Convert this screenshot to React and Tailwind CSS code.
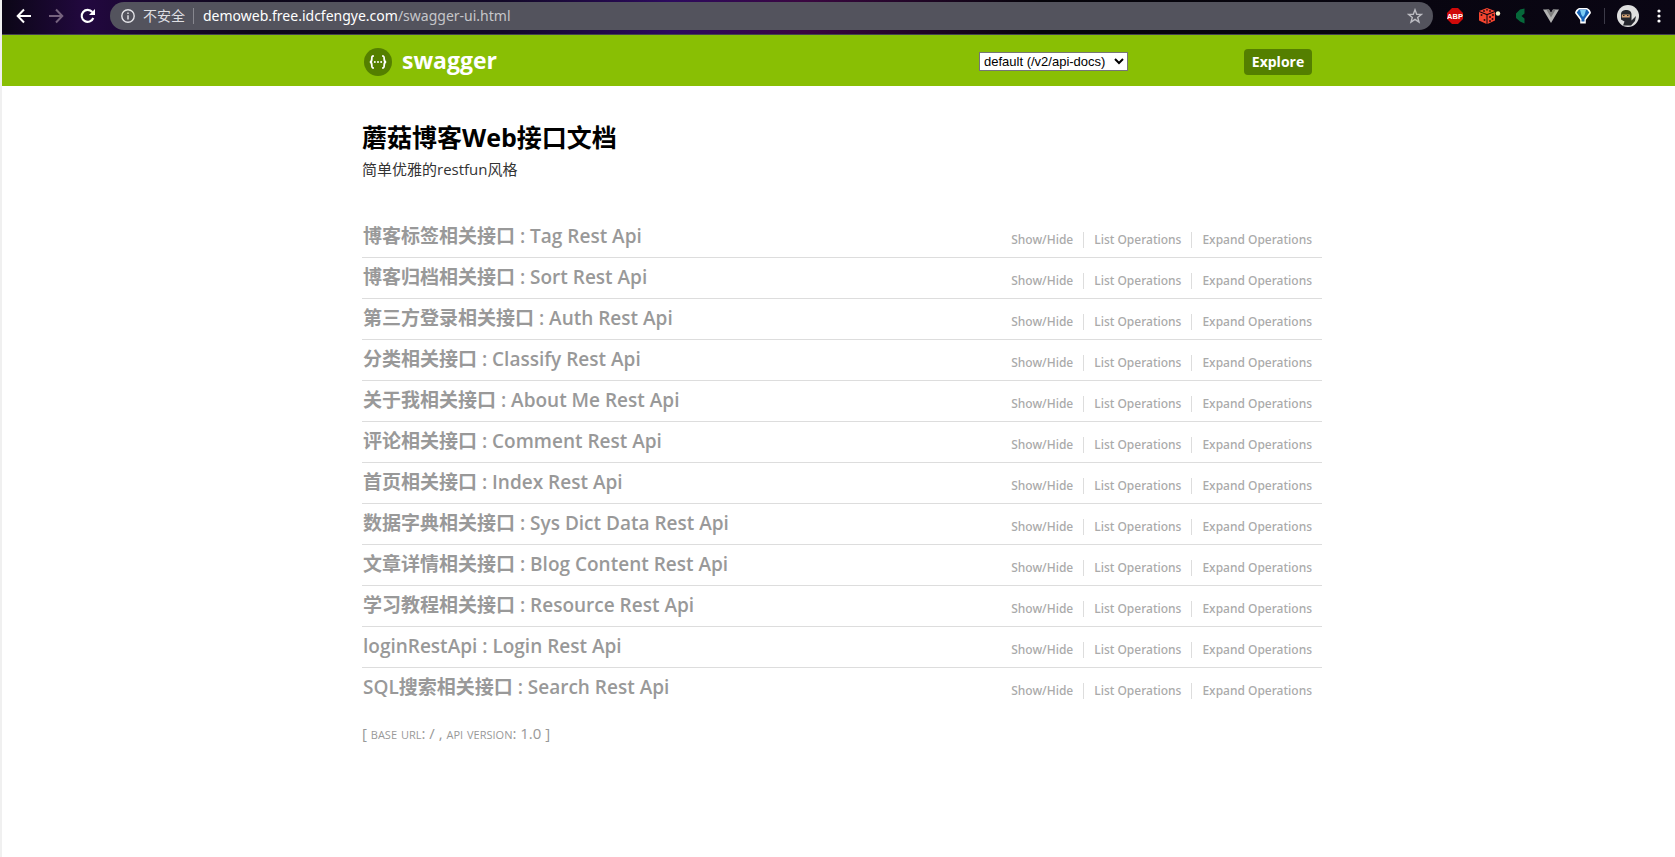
import React from "react";

const groups = [
  "博客标签相关接口 : Tag Rest Api",
  "博客归档相关接口 : Sort Rest Api",
  "第三方登录相关接口 : Auth Rest Api",
  "分类相关接口 : Classify Rest Api",
  "关于我相关接口 : About Me Rest Api",
  "评论相关接口 : Comment Rest Api",
  "首页相关接口 : Index Rest Api",
  "数据字典相关接口 : Sys Dict Data Rest Api",
  "文章详情相关接口 : Blog Content Rest Api",
  "学习教程相关接口 : Resource Rest Api",
  "loginRestApi : Login Rest Api",
  "SQL搜索相关接口 : Search Rest Api",
];

function BrowserBar() {
  return (
    <div className="flex h-[35px] items-center border-b border-[#45434f] bg-[linear-gradient(90deg,#0b0616_0%,#22083f_5%,#0c0618_15%,#120828_30%,#2c0a5e_40%,#3a0640_48%,#05040a_62%,#0a0614_100%)] pb-1 pt-px text-white">
      <div className="flex items-center gap-4 pl-[14px]">
        <button aria-label="Back" className="size-4">
          <svg viewBox="0 0 16 16" className="size-4" fill="none" stroke="white" strokeWidth="2"><path d="M15 8H2M8 1.500L1.700 8L8 14.500" /></svg>
        </button>
        <button aria-label="Forward" className="size-4">
          <svg viewBox="0 0 16 16" className="size-4" fill="none" stroke="#75627e" strokeWidth="2"><path d="M1 8H14M8 1.500L14.300 8L8 14.500" /></svg>
        </button>
        <button aria-label="Reload" className="size-4">
          <svg viewBox="0 0 16 16" className="size-4"><path d="M13.300 10A6 6 0 1 1 12.300 4" fill="none" stroke="white" strokeWidth="2.100" /><path d="M15 1V7H9Z" fill="white" /></svg>
        </button>
      </div>
      <div className="ml-[14px] flex h-7 flex-1 items-center rounded-full bg-[#53535d] pl-[11px] pr-[10px] font-['Noto_Sans','Noto_Sans_CJK_SC',sans-serif] text-[14px]">
        <svg viewBox="0 0 14 14" className="size-[14px]" fill="none" stroke="#e4e4e8" strokeWidth="1.400"><circle cx="7" cy="7" r="6.200" /><path d="M7 6.200V10.500M7 3.500V5" /></svg>
        <span className="ml-2 text-[#dfdfe3]">不安全</span>
        <span className="ml-2 h-4 w-px bg-[#87878f]" />
        <span className="ml-[9px] text-[#c6c6ca]"><span className="text-white">demoweb.free.idcfengye.com</span>/swagger-ui.html</span>
        <button aria-label="Bookmark" className="ml-auto size-4">
          <svg viewBox="0 0 16 16" className="size-4" fill="none" stroke="#bcbcc2" strokeWidth="1.400"><path d="M8 1.800L9.700 6.200L14.400 6.400L10.700 9.400L12 14L8 11.300L4 14L5.300 9.400L1.600 6.400L6.300 6.200Z" /></svg>
        </button>
      </div>
      <div className="ml-[14px] flex items-center gap-3 pr-2">
        <div className="flex items-center gap-4 pr-px">
          <svg viewBox="0 0 16 16" className="size-4"><path d="M5 0H11L16 5V11L11 16H5L0 11V5Z" fill="#d00a0a" /><text x="8" y="10.700" textAnchor="middle" fill="white" fontSize="7.500" fontWeight="700" fontFamily="Liberation Sans">ABP</text></svg>
          <svg viewBox="0 0 16 16" className="size-4 overflow-visible"><path d="M8 0L16 3L8 6L0 3ZM0 4L7.500 7V16L0 12.500ZM16 4L8.500 7V16L16 12.500Z" fill="#f5452f" /><g fill="#2a0b10"><circle cx="5" cy="3" r=".9" /><circle cx="8" cy="1.800" r=".9" /><circle cx="11" cy="3" r=".9" /><circle cx="2.500" cy="7" r="1" /><circle cx="5.500" cy="12" r="1" /><circle cx="11" cy="9" r="1" /><circle cx="13.500" cy="11" r="1" /><circle cx="11" cy="13" r="1" /><circle cx="14" cy="7" r="1" /></g><circle cx="19" cy="5.500" r="2.200" fill="#f3f4c8" /></svg>
          <svg viewBox="0 0 16 16" className="size-4"><path d="M13.500 .5L9 1.500L5 5.500V10L9 13.500L13.500 15.500V10.500L10.500 8L13.500 5.500Z" fill="#06683a" /></svg>
          <svg viewBox="0 0 16 16" className="size-4"><path d="M0 1.500H6L8 5L10 1.500H16L8 15Z" fill="#b2b2b2" /><path d="M3.300 1.500H6L8 5L10 1.500H12.700L8 9.500Z" fill="#7d7d7d" /></svg>
          <svg viewBox="0 0 16 16" className="size-4"><path d="M4 0H12Q15.500 1.500 16 5L10.800 12V15.500H5.200V12L0 5Q.5 1.500 4 0Z" fill="white" /><path d="M4 1.500H12L14.300 4.500L9.500 11V13.500H6.500V11L1.700 4.500Z" fill="#1763b5" /><path d="M5 2H11L9.500 7L8 9L6.500 7Z" fill="#7ccdf5" /></svg>
        </div>
        <span className="h-4 w-px bg-[#3c3a48]" />
        <svg viewBox="0 0 22 22" className="size-[22px]"><circle cx="11" cy="11" r="11" fill="#dedede" /><path d="M4 9C4 3.500 14.500 3.500 14.500 9V15.500L19 11L18 16L14 20.500H6L7.500 16.500L4 14.500Z" fill="#25262d" /><path d="M4.800 9.500H12.800V12.500H4.800Z" fill="#d6a477" /><path d="M6 10.500H7.500M10 10.500H11.500" stroke="#25262d" strokeWidth="1.200" /></svg>
        <button aria-label="Menu" className="size-4"><svg viewBox="0 0 16 16" className="size-4" fill="white"><circle cx="8" cy="3" r="1.600" /><circle cx="8" cy="8" r="1.600" /><circle cx="8" cy="13" r="1.600" /></svg></button>
      </div>
    </div>
  );
}

function Logo() {
  return (
    <svg viewBox="0 0 28 28" className="size-7" fill="none" stroke="white"><circle cx="14" cy="14" r="14" fill="#547f00" stroke="none" /><path strokeWidth="1.800" d="M9.800 8C7.800 8 7.800 8.800 7.800 11C7.800 13 7.400 14 5.800 14C7.400 14 7.800 15 7.800 17C7.800 19.200 7.800 20 9.800 20M18.200 8C20.200 8 20.200 8.800 20.200 11C20.200 13 20.600 14 22.200 14C20.600 14 20.200 15 20.200 17C20.200 19.200 20.200 20 18.200 20" /><g fill="white" stroke="none"><circle cx="10.800" cy="14" r="1" /><circle cx="14" cy="14" r="1" /><circle cx="17.200" cy="14" r="1" /></g></svg>
  );
}

export default function App() {
  return (
    <div className="min-h-screen border-l-2 border-[#f0f0f0] bg-white font-['Open_Sans','Noto_Sans_CJK_SC',sans-serif]">
      <BrowserBar />
      <header className="bg-[#89bf04] pl-[7px]">
        <div className="mx-auto flex h-[51px] max-w-[960px] items-center pt-0.5 pl-[2px] pr-[10px]">
          <a href="#" className="flex items-center gap-[10px] text-[23px] leading-6 font-bold text-white"><Logo /><span className="pb-1">swagger</span></a>
          <select aria-label="API definition" className="ml-auto h-[19px] w-[149px] border border-[#767676] bg-white font-['Liberation_Sans',sans-serif] text-[13px] text-black">
            <option>default (/v2/api-docs)</option>
          </select>
          <button className="ml-[116px] h-[26px] w-[68px] rounded bg-[#547f00] text-[14px] font-bold text-white">Explore</button>
        </div>
      </header>
      <main className="pl-[7px]">
        <div className="mx-auto max-w-[960px] pt-[33px]">
          <h1 className="text-[25px] leading-9 font-bold text-black">蘑菇博客Web接口文档</h1>
          <p className="mt-0.5 text-[15px] leading-6 text-[#333]">简单优雅的restfun风格</p>
          <ul className="mt-9">
            {groups.map((g) => (
              <li key={g} className="flex h-[41px] items-center justify-between border-b border-[#ddd] last:border-transparent">
                <h2 className="pb-0.5 pl-px text-[19px] leading-6 font-semibold"><a href="#" className="text-[#999]">{g}</a></h2>
                <div className="flex pr-[10px] pt-[6px] font-['Noto_Sans',sans-serif] text-[12px] leading-4 font-medium text-[#aaa]">
                  <a href="#" className="border-r border-[#ddd] pr-[10px]">Show/Hide</a>
                  <a href="#" className="border-r border-[#ddd] px-[10px]">List Operations</a>
                  <a href="#" className="pl-[10px]">Expand Operations</a>
                </div>
              </li>
            ))}
          </ul>
          <footer className="mt-3 text-[15px] leading-6 text-[#999] [font-variant-caps:small-caps]">[ base url: / , api version: 1.0 ]</footer>
        </div>
      </main>
    </div>
  );
}
